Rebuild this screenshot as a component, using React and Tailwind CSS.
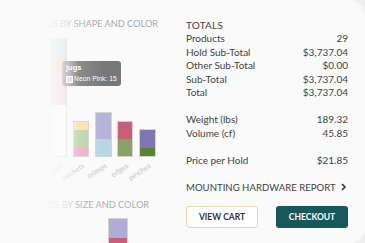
import React from "react";

const rows = [
  ["Products", "29"],
  ["Hold Sub-Total", "$3,737.04"],
  ["Other Sub-Total", "$0.00"],
  ["Sub-Total", "$3,737.04"],
  ["Total", "$3,737.04"],
];

// stacked bars: x position, segments from top [height, colour]
const bars = [
  { x: 50, segs: [[19, "#b8d9e4"], [15, "#f7b98f"], [33, "#f2b8d2"], [52, "#ffffff"]], label: "jugs" },
  { x: 73, segs: [[9, "#fbe2a8"], [18, "#bfd1aa"], [9, "#f0abc9"]], label: "pockets" },
  { x: 95, segs: [[27, "#b7b2d8"], [18, "#b6d8e3"]], label: "crimps" },
  { x: 117, segs: [[18, "#c75f79"], [18, "#86a362"]], label: "edges" },
  { x: 139, segs: [[19, "#7d77b4"], [9, "#5d8135"]], label: "pinches" },
];

const Chart = () => {
  const base = 157 - 38;
  return (
    <svg width="172" height="150" className="block">
      {bars.map((b, i) => {
        let total = b.segs.reduce((s, g) => s + g[0], 0);
        let y = base - total;
        const w = i % 2 === 1 ? 16 : 17;
        return (
          <g key={i}>
            {b.segs.map((g, j) => {
              const r = <rect key={j} x={b.x} y={y} width={w} height={g[0]} fill={g[1]} />;
              y += g[0];
              return r;
            })}
            <rect x={b.x + 0.5} y={base - total + 0.5} width={w - 1} height={total - 1} fill="none" stroke="#d4d4d4" strokeWidth="1" />
            <text
              x={b.x + w / 2 + 4}
              y={base + 10}
              textAnchor="end"
              fontSize="7.5"
              fill="#c4c4c4"
              transform={`rotate(-33 ${b.x + w / 2 + 4} ${base + 10})`}
              style={{ fontFamily: "Lato, sans-serif" }}
            >
              {b.label}
            </text>
          </g>
        );
      })}
    </svg>
  );
};

const App = () => {
  return (
    <div className="w-[365px] h-[243px] bg-[#efefef] overflow-hidden" style={{ fontFamily: "Lato, 'Liberation Sans', sans-serif" }}>
      <div className="h-full rounded-[16px] bg-[#fafafa] flex">
        {/* left: charts (faded) */}
        <div className="relative shrink-0 w-[172px] h-full overflow-hidden">
          <div className="pt-[18px] pr-[14px] text-[9.2px] leading-[12px] text-[#a9a9a9] whitespace-nowrap text-right">
            HOLDS BY SHAPE AND COLOR
          </div>
          <div className="pt-[8px]">
            <Chart />
          </div>
          <div className="absolute left-[62px] top-[61px] w-[59px] h-[25px] rounded-[3px] bg-[rgba(0,0,0,0.52)] pl-[4px] pt-[2px] text-white text-[7.5px] leading-[10px]" style={{ fontFamily: "'Liberation Sans', Arial, sans-serif" }}>
            <div className="font-bold">jugs</div>
            <div className="flex items-center gap-[1px] mt-[1px] whitespace-nowrap">
              <span className="w-[7px] h-[7px] shrink-0 bg-[#f2b8d2] border border-white" />
              <span className="text-[6.8px]">Neon Pink: 15</span>
            </div>
          </div>
          <div className="absolute left-0 top-[199px] w-[149px] text-right text-[9.2px] leading-[12px] text-[#acacac] whitespace-nowrap">
            HOLDS BY SIZE AND COLOR
          </div>
          <div className="absolute left-[108px] top-[218px] w-[20px] h-[40px] border border-[#d4d4d4] flex flex-col">
            <div className="h-[19px] bg-[#b1acd6]" />
            <div className="flex-1 bg-[#c75f79]" />
          </div>
          <div className="absolute inset-0 bg-[linear-gradient(to_right,#fafafa_0%,#fafafa_24%,rgba(250,250,250,0.8)_36%,rgba(250,250,250,0.15)_46%,rgba(250,250,250,0)_60%)]" />
        </div>

        {/* right: totals */}
        <div className="flex-1 min-w-0 pl-[14px] pr-[17px] pt-[18.5px] text-[10px] leading-[13.5px] text-[#424242]">
          <div className="tracking-[0.2px]">TOTALS</div>
          {rows.map(([k, v]) => (
            <div key={k} className="flex justify-between">
              <span>{k}</span>
              <span>{v}</span>
            </div>
          ))}
          <div className="h-[13.5px]" />
          <div className="flex justify-between">
            <span>Weight (lbs)</span>
            <span>189.32</span>
          </div>
          <div className="flex justify-between">
            <span>Volume (cf)</span>
            <span>45.85</span>
          </div>
          <div className="h-[13.5px]" />
          <div className="flex justify-between">
            <span>Price per Hold</span>
            <span>$21.85</span>
          </div>
          <div className="h-[13.5px]" />
          <div className="flex items-center gap-[4px] whitespace-nowrap text-[9.6px]">
            <span>MOUNTING HARDWARE REPORT</span>
            <svg width="7" height="8" viewBox="0 0 7 8" className="shrink-0">
              <path d="M2 1 L5 4 L2 7" fill="none" stroke="#333" strokeWidth="1.6" />
            </svg>
          </div>
          <div className="flex justify-between mt-[12px]">
            <button className="w-[72px] h-[22px] rounded-[3px] border border-[#ecd6ab] bg-white text-[8.5px] font-bold text-[#333] leading-none">
              VIEW CART
            </button>
            <button className="w-[72px] h-[22px] rounded-[3px] bg-[#17585a] text-[8.5px] font-bold text-white leading-none">
              CHECKOUT
            </button>
          </div>
        </div>
      </div>
    </div>
  );
};

export default App;
